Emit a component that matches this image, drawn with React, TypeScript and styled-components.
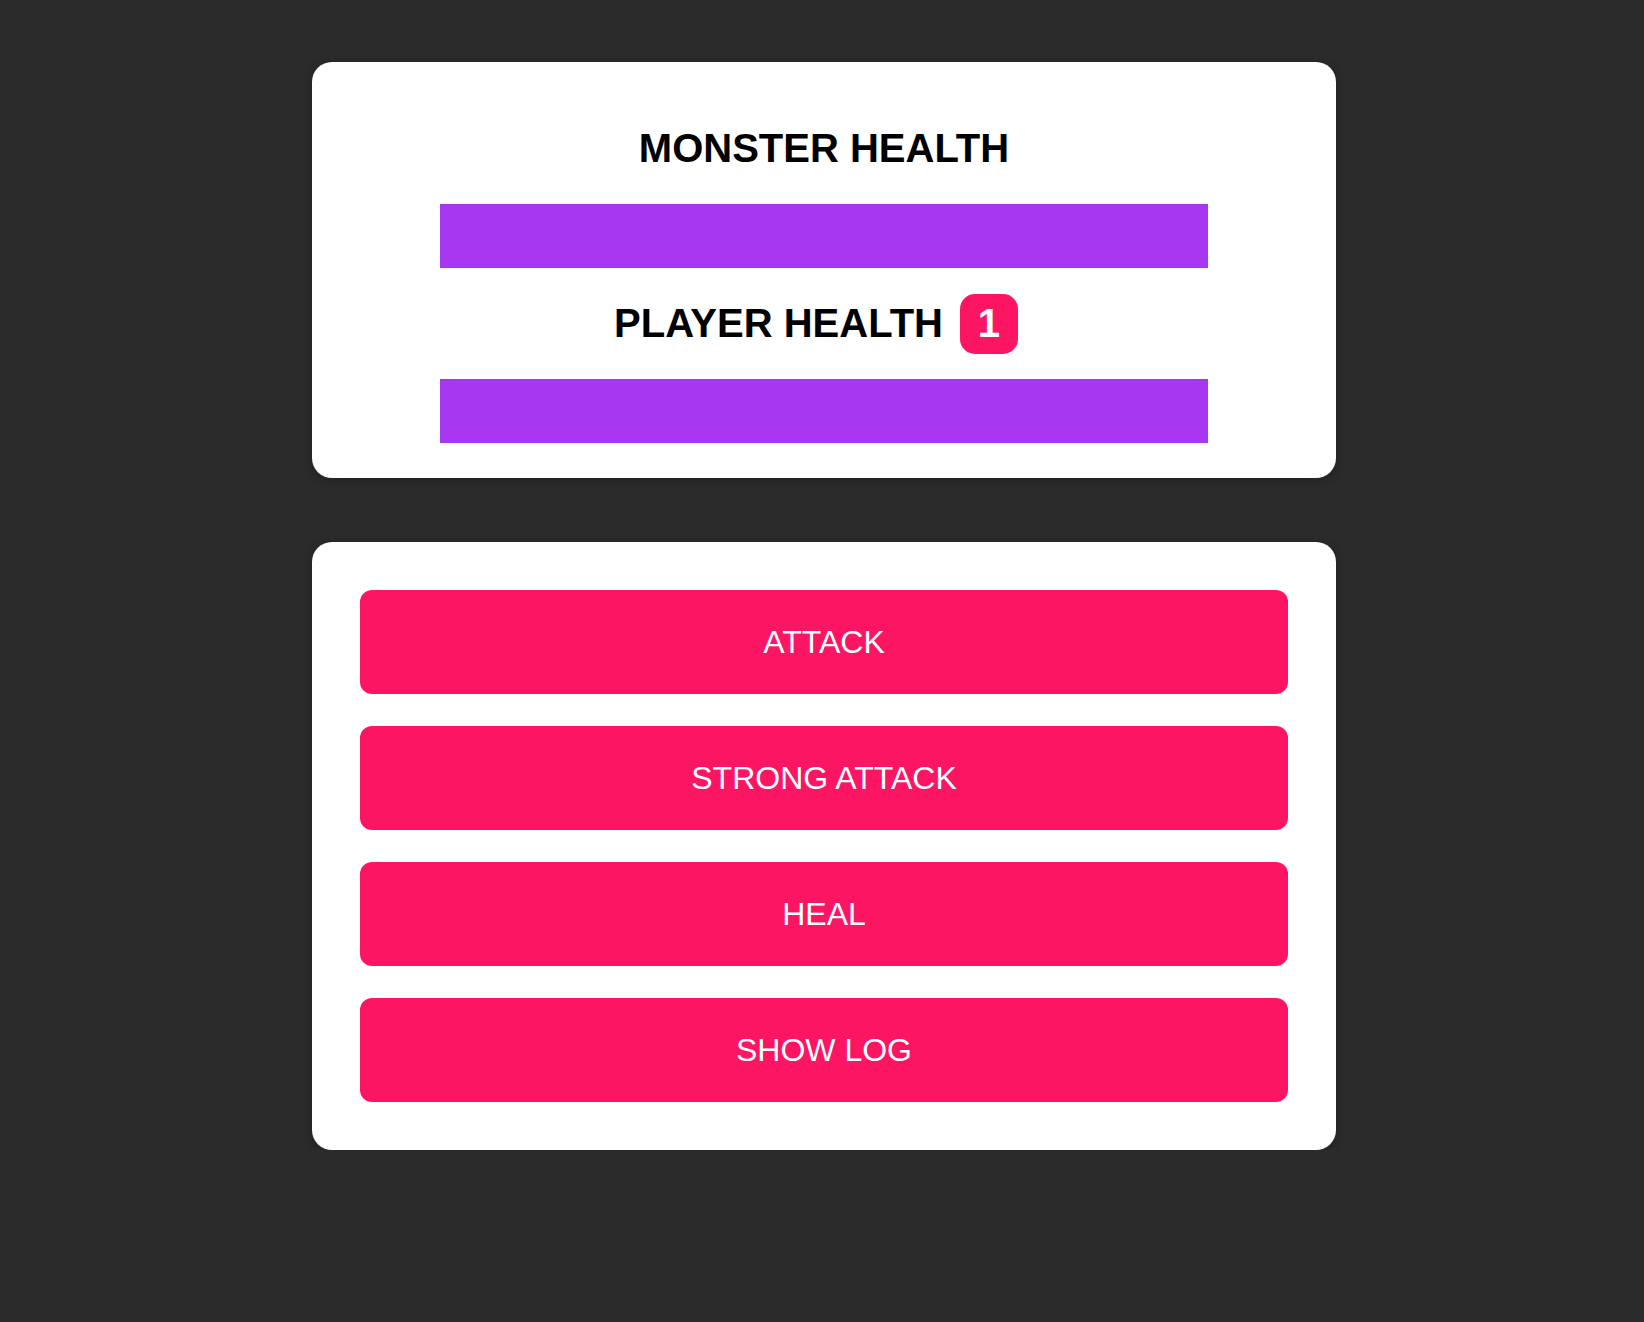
import styled, {createGlobalStyle} from "styled-components";

const GlobalStyle = createGlobalStyle`
  html, body {
    margin: 0;
    padding: 0;
    background: #2b2b2b;
    font-family: "Liberation Sans", Arial, Helvetica, sans-serif;
  }
`;

const actions = ["ATTACK", "STRONG ATTACK", "HEAL", "SHOW LOG"];

interface BarProps {
  percent: number;
}

const HealthBar = ({percent}: BarProps) => (
  <BarTrack>
    <BarFill style={{width: `${percent}%`}} />
  </BarTrack>
);

const App = () => {
  return (
    <>
      <GlobalStyle />
      <Page>
        <Card>
          <HealthSection>
            <TitleRow>
              <Title>MONSTER HEALTH</Title>
            </TitleRow>
            <HealthBar percent={100} />
            <TitleRow withBadge>
              <Title>PLAYER HEALTH</Title>
              <Badge>1</Badge>
            </TitleRow>
            <HealthBar percent={100} />
          </HealthSection>
        </Card>
        <Card>
          <Controls>
            {actions.map(label => (
              <ActionButton key={label}>{label}</ActionButton>
            ))}
          </Controls>
        </Card>
      </Page>
    </>
  );
};

const Page = styled.div`
  display: flex;
  flex-direction: column;
  align-items: center;
  gap: 64px;
  padding: 62px 0 0 4px;
`;

const Card = styled.section`
  width: 1024px;
  box-sizing: border-box;
  background: #fff;
  border-radius: 20px;
  box-shadow: 0 2px 8px rgba(0, 0, 0, 0.26);
`;

const HealthSection = styled.div`
  display: flex;
  flex-direction: column;
  align-items: center;
  gap: 26px;
  padding: 57px 0 35px;
`;

const TitleRow = styled.div<{withBadge?: boolean}>`
  display: flex;
  align-items: center;
  justify-content: center;
  gap: 17px;
  height: 59px;
  padding-right: ${p => (p.withBadge ? "16px" : "0")};
`;

const Title = styled.h2`
  margin: 0;
  font-size: 40px;
  font-weight: 700;
  color: #000;
`;

const Badge = styled.span`
  display: inline-flex;
  align-items: center;
  justify-content: center;
  min-width: 58px;
  height: 60px;
  box-sizing: border-box;
  padding: 0 16px;
  border-radius: 15px;
  background: #fc1563;
  color: #fff;
  font-size: 40px;
  font-weight: 700;
`;

const BarTrack = styled.div`
  width: 75%;
  height: 64px;
  background: #fff;
`;

const BarFill = styled.div`
  height: 100%;
  background: #a737f0;
`;

const Controls = styled.div`
  display: flex;
  flex-direction: column;
  gap: 32px;
  padding: 48px;
`;

const ActionButton = styled.button`
  height: 104px;
  border: none;
  border-radius: 12px;
  background: #fc1563;
  color: #fff;
  font-family: "Liberation Sans", Arial, Helvetica, sans-serif;
  font-size: 32px;
  cursor: pointer;
`;

export default App;
